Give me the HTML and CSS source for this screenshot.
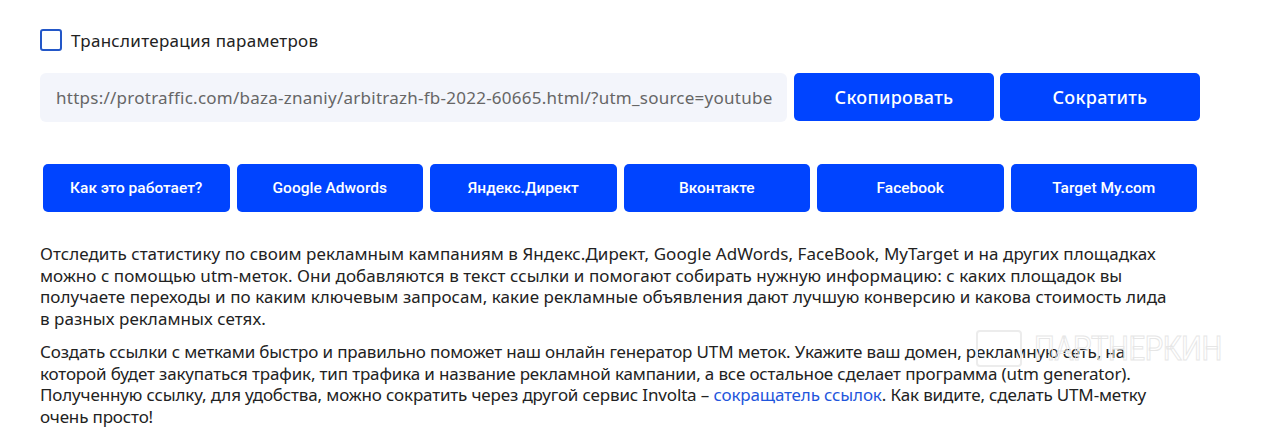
FILE: index.html
```html
<!DOCTYPE html>
<html lang="ru">
<head>
  <meta charset="UTF-8" />
  <meta name="viewport" content="width=device-width, initial-scale=1.0" />
  <title>UTM генератор</title>
  <link rel="stylesheet" href="styles.css">
</head>
<body>
  <div class="wrap">
    <label class="translit">
      <span class="check"></span>
      Транслитерация параметров
    </label>

    <div class="result">
      <div class="url">https://protraffic.com/baza-znaniy/arbitrazh-fb-2022-60665.html/?utm_source=youtube</div>
      <button class="btn">Скопировать</button>
      <button class="btn">Сократить</button>
    </div>

    <div class="presets">
      <button class="preset">Как это работает?</button>
      <button class="preset">Google Adwords</button>
      <button class="preset">Яндекс.Директ</button>
      <button class="preset">Вконтакте</button>
      <button class="preset">Facebook</button>
      <button class="preset">Target My.com</button>
    </div>

    <div class="about">
      <p>Отследить статистику по своим рекламным кампаниям в Яндекс.Директ, Google AdWords, FaceBook, MyTarget и на других площадках можно с помощью utm-меток. Они добавляются в текст ссылки и помогают собирать нужную информацию: с каких площадок вы получаете переходы и по каким ключевым запросам, какие рекламные объявления дают лучшую конверсию и какова стоимость лида в разных рекламных сетях.</p>
      <p>Создать ссылки с метками быстро и правильно поможет наш онлайн генератор UTM меток. Укажите ваш домен, рекламную сеть, на которой будет закупаться трафик, тип трафика и название рекламной кампании, а все остальное сделает программа (utm generator). Полученную ссылку, для удобства, можно сократить через другой сервис Involta – <a href="#">сокращатель ссылок</a>. Как видите, сделать <span class="nobr">UTM-метку</span> очень просто!</p>
    </div>
  </div>

  <div class="watermark"><span class="wm-box"></span><span class="wm-text">ПАРТНЕРКИН</span></div>
</body>
</html>
```

FILE: styles.css
```css
* {
  box-sizing: border-box;
  margin: 0;
  padding: 0;
}
body {
  font-family: "Noto Sans", "Open Sans", sans-serif;
  color: #222;
  background: #fff;
  position: relative;
}
.wrap {
  width: 1160px;
  margin-left: 40px;
  padding-top: 29px;
}
.translit {
  display: flex;
  align-items: center;
  gap: 9px;
  font-size: 17px;
  letter-spacing: 0.3px;
  color: #222;
  height: 22px;
}
.check {
  width: 22px;
  height: 22px;
  border: 2px solid #2357c8;
  border-radius: 3px;
}
.result {
  display: flex;
  margin-top: 22px;
  gap: 6px;
}
.url {
  flex: 1;
  height: 49px;
  margin-right: 1px;
  background: #f3f5fb;
  border-radius: 6px;
  padding: 0 16px;
  display: flex;
  align-items: center;
  font-size: 17px;
  letter-spacing: 0.25px;
  color: #666;
  white-space: nowrap;
  overflow: hidden;
}
.btn {
  width: 200px;
  height: 48px;
  border: none;
  border-radius: 5px;
  background: #0044ff;
  color: #fff;
  font-family: inherit;
  font-size: 18px;
  font-weight: 500;
  letter-spacing: 0.3px;
}
.presets {
  display: grid;
  grid-template-columns: repeat(6, 1fr);
  gap: 7px;
  padding: 0 3px;
  margin-top: 42px;
}
.preset {
  height: 48px;
  border: none;
  border-radius: 5px;
  background: #0044ff;
  color: #fff;
  font-family: "Roboto", sans-serif;
  font-size: 15.5px;
  font-weight: 500;
}
.about {
  margin-top: 31px;
  margin-right: 30px;
  font-size: 17px;
  letter-spacing: 0.05px;
  line-height: 21.5px;
}
.about p + p {
  margin-top: 12px;
  letter-spacing: -0.15px;
}
.about a {
  color: #1f56dc;
  text-decoration: none;
}
.nobr {
  white-space: nowrap;
}
.watermark {
  position: absolute;
  left: 976px;
  top: 328px;
  display: flex;
  align-items: center;
  gap: 12px;
  pointer-events: none;
}
.wm-box {
  width: 46px;
  height: 37px;
  border: 2px solid #ececec;
  border-radius: 4px;
}
.wm-text {
  font-family: "Roboto", sans-serif;
  font-size: 34px;
  letter-spacing: -0.5px;
  color: transparent;
  -webkit-text-stroke: 1px #e6e6e6;
  transform: scaleX(0.86);
  transform-origin: left center;
}
```
